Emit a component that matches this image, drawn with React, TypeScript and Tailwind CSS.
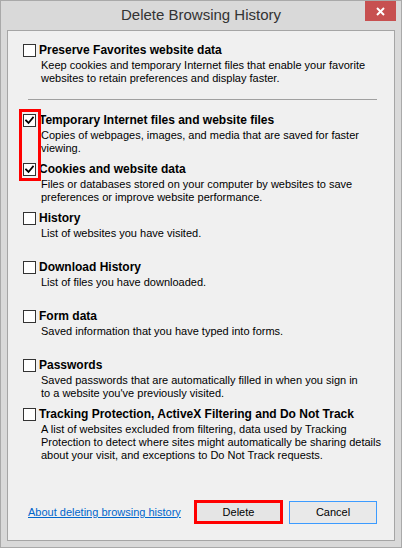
import { ReactNode } from "react";

interface Item {
  title: string;
  desc: string[];
  checked?: boolean;
}

const items: Item[] = [
  {
    title: "Temporary Internet files and website files",
    desc: ["Copies of webpages, images, and media that are saved for faster", "viewing."],
    checked: true,
  },
  {
    title: "Cookies and website data",
    desc: ["Files or databases stored on your computer by websites to save", "preferences or improve website performance."],
    checked: true,
  },
  { title: "History", desc: ["List of websites you have visited."] },
  { title: "Download History", desc: ["List of files you have downloaded."] },
  { title: "Form data", desc: ["Saved information that you have typed into forms."] },
  {
    title: "Passwords",
    desc: ["Saved passwords that are automatically filled in when you sign in", "to a website you've previously visited."],
  },
  {
    title: "Tracking Protection, ActiveX Filtering and Do Not Track",
    desc: [
      "A list of websites excluded from filtering, data used by Tracking",
      "Protection to detect where sites might automatically be sharing details",
      "about your visit, and exceptions to Do Not Track requests.",
    ],
  },
];

function Checkbox({ checked }: { checked?: boolean }) {
  return (
    <span className="flex h-[13px] w-[13px] shrink-0 items-center justify-center border border-[#333] bg-white">
      {checked && (
        <svg width="9" height="9" viewBox="0 0 9 9" fill="none" stroke="#000" strokeWidth="1.8" strokeLinecap="square">
          <polyline points="1,4.5 3.5,7 8,1.5" />
        </svg>
      )}
    </span>
  );
}

function Option({ item }: { item: Item }): ReactNode {
  return (
    <div className="flex h-[49px] flex-col">
      <div className="flex h-4 items-center gap-[3px]">
        <Checkbox checked={item.checked} />
        <span className="whitespace-nowrap text-[12px] font-bold leading-4">{item.title}</span>
      </div>
      <div className="mt-[1px] pl-[18px] text-[11px] leading-[13px]">
        {item.desc.map((line) => (
          <div key={line} className="whitespace-nowrap">{line}</div>
        ))}
      </div>
    </div>
  );
}

export default function App() {
  return (
    <div
      className="relative flex h-[548px] w-[402px] flex-col border border-[#a9a9a9] bg-[#d9d9d9] text-black"
      style={{ fontFamily: '"Liberation Sans", Arial, sans-serif' }}
    >
      {/* Title bar */}
      <div className="relative flex h-[29px] shrink-0 items-center justify-center">
        <span className="text-[15px] text-[#333]">Delete Browsing History</span>
        <button className="absolute right-[5px] top-0 flex h-[20px] w-[31px] items-center justify-center bg-[#c75050]">
          <svg width="9" height="9" viewBox="0 0 9 9" stroke="#fff" strokeWidth="2">
            <line x1="1" y1="1" x2="8" y2="8" />
            <line x1="8" y1="1" x2="1" y2="8" />
          </svg>
        </button>
      </div>

      {/* Content panel */}
      <div className="mx-[6px] mb-[6px] flex flex-1 flex-col border border-[#a5a5a5] bg-[#f0f0f0] pl-[15px] pt-[11px]">
        <Option item={{ title: "Preserve Favorites website data", desc: ["Keep cookies and temporary Internet files that enable your favorite", "websites to retain preferences and display faster."] }} />
        <div className="ml-[5px] mr-[17px] mt-2 mb-3 h-px bg-[#a0a0a0]" />
        {items.map((item) => (
          <Option key={item.title} item={item} />
        ))}

        {/* Footer */}
        <div className="mt-auto mb-4 flex items-center pr-[17px]">
          <a href="#" className="ml-[5px] whitespace-nowrap text-[11px] text-[#0066cc] underline">
            About deleting browsing history
          </a>
          <button className="ml-auto flex h-[24px] w-[89px] items-center justify-center border-[3px] border-[#ff0000] bg-[#e5e5e5] text-[11px]">
            Delete
          </button>
          <button className="ml-[6px] flex h-[23px] w-[88px] items-center justify-center border border-[#3c9bff] bg-[#e9e9e9] text-[11px]">
            Cancel
          </button>
        </div>
      </div>

      {/* Highlight around checked boxes */}
      <div className="pointer-events-none absolute left-[18px] top-[108px] h-[72px] w-[22px] border-[3px] border-[#ff0000]" />
    </div>
  );
}
